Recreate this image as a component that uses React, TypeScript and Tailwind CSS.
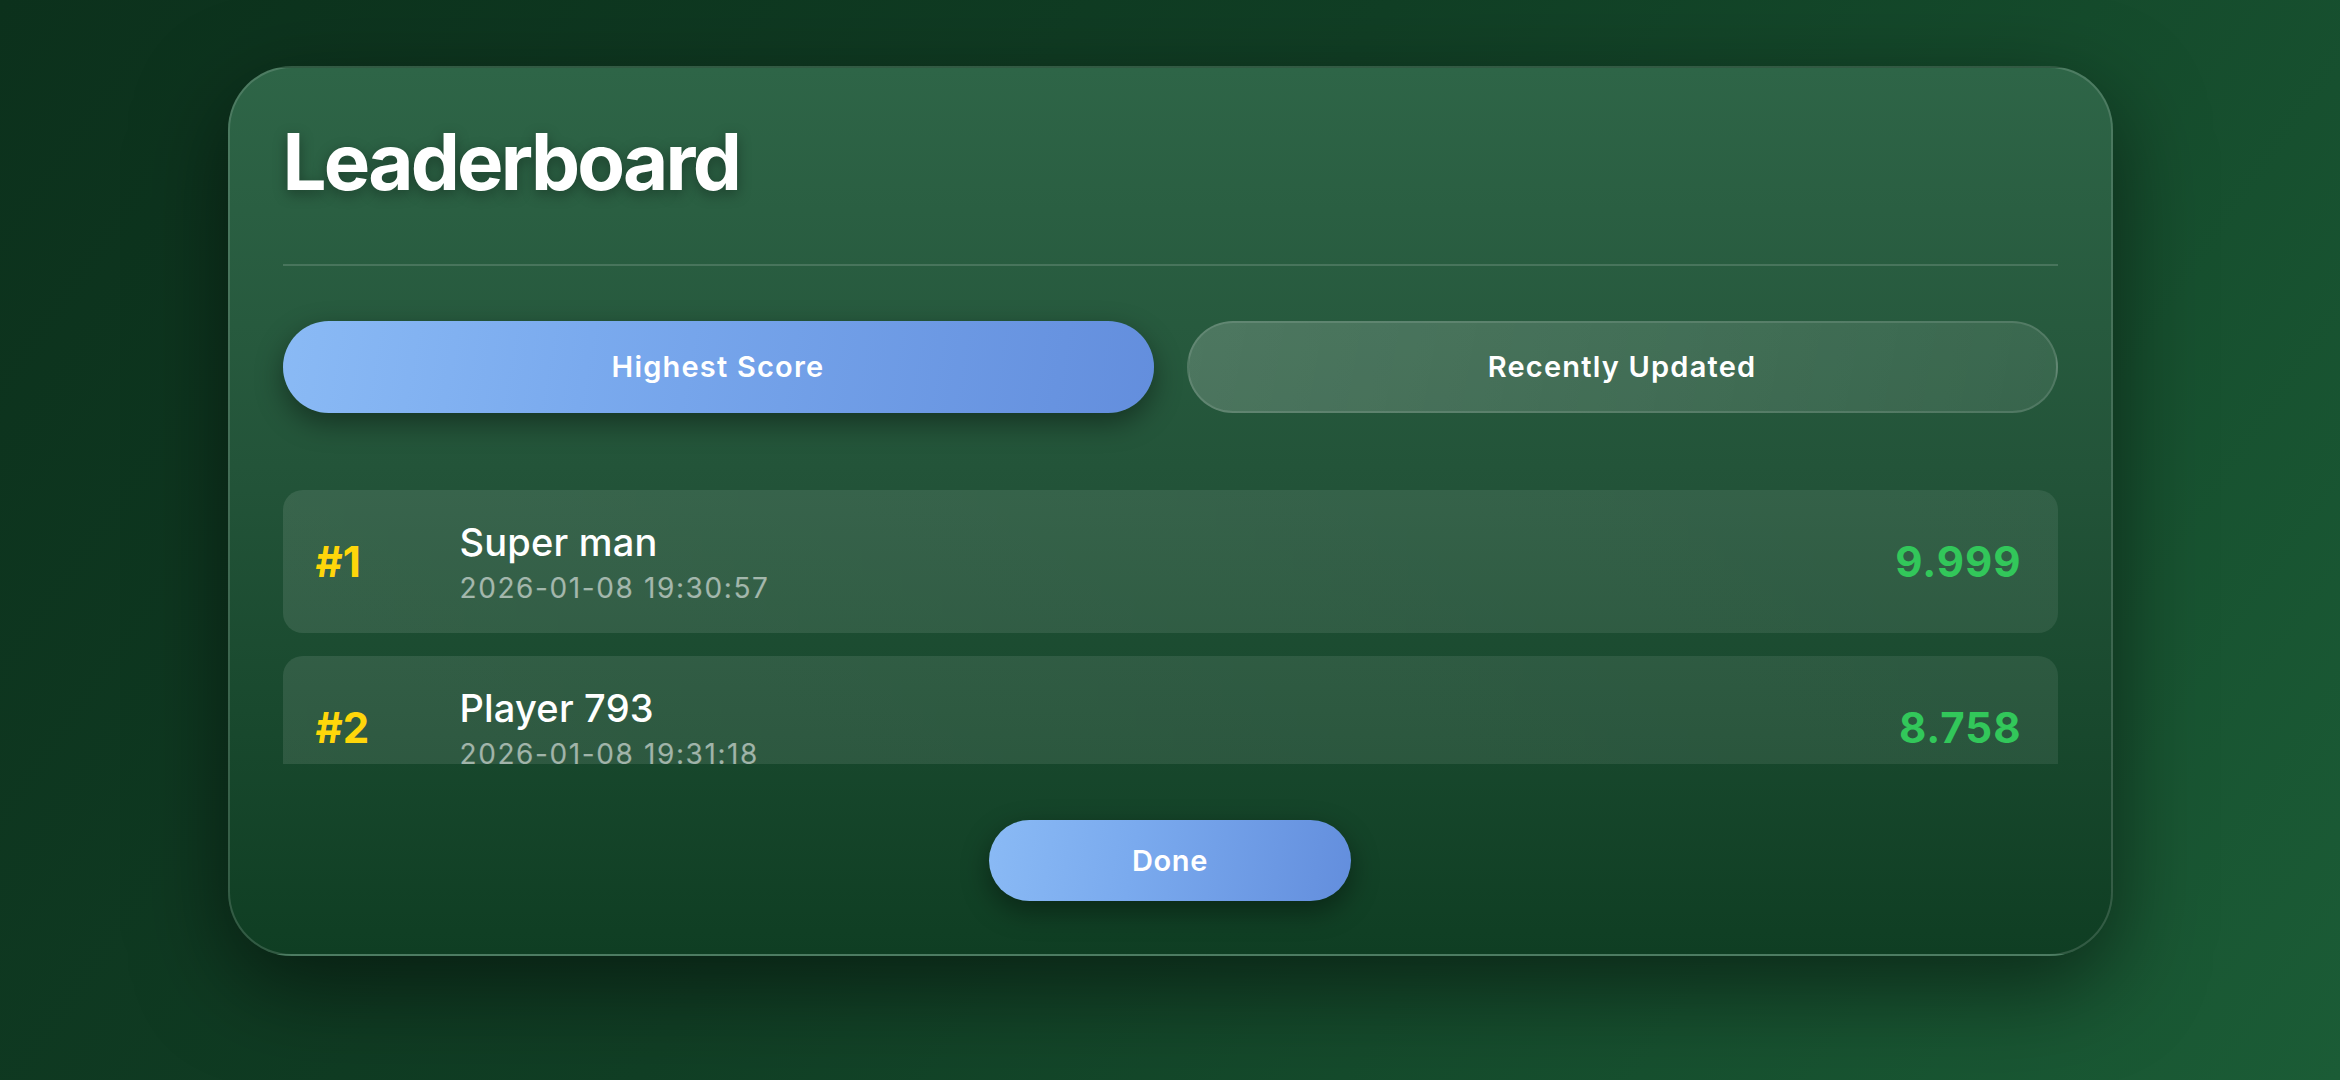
import React from "react"

type Entry = {
  rank: number
  name: string
  date: string
  score: string
}

const entries: Entry[] = [
  { rank: 1, name: "Super man", date: "2026-01-08 19:30:57", score: "9.999" },
  { rank: 2, name: "Player 793", date: "2026-01-08 19:31:18", score: "8.758" },
]

function EntryRow({ entry }: { entry: Entry }) {
  return (
    <div className="flex h-[143px] shrink-0 items-center rounded-[20px] bg-[linear-gradient(90deg,rgba(255,255,255,0.1),rgba(255,255,255,0.08))] pl-[33px] pr-[36px]">
      <span className="w-[144px] text-[42px] leading-none font-bold text-[#ffd60a]">
        #{entry.rank}
      </span>
      <div className="flex min-w-0 flex-1 flex-col">
        <span className="text-[38px] leading-[46px] font-medium tracking-[0.2px] text-white">
          {entry.name}
        </span>
        <span className="mt-[6px] text-[28px] leading-[34px] tracking-[1.6px] text-white/55">
          {entry.date}
        </span>
      </div>
      <span className="text-[42px] leading-none font-bold tracking-[1px] text-[#32c75a]">
        {entry.score}
      </span>
    </div>
  )
}

export default function App() {
  return (
    <div
      className="min-h-[1080px] w-full bg-[linear-gradient(125deg,#0c311c_0%,#113f25_45%,#1b5c36_100%)] pt-[66px]"
      style={{ fontFamily: "Inter, 'Noto Sans', sans-serif" }}
    >
      <div className="mx-auto flex w-[1885px] flex-col rounded-[64px] border-2 border-white/15 bg-[linear-gradient(180deg,#2e6547_0%,#235439_45%,#0f3e23_100%)] px-[53px] pt-[55px] pb-[53px] shadow-[0_30px_90px_rgba(0,0,0,0.5)]">
        <h1 className="text-[78px] leading-none font-bold tracking-[-2.8px] text-white [text-shadow:0_4px_14px_rgba(0,0,0,0.35)]">
          Leaderboard
        </h1>

        <div className="mt-[63px] h-[2px] bg-white/15" />

        <div className="mt-[55px] grid grid-cols-2 gap-[33px]">
          <button className="flex h-[92px] items-center justify-center rounded-full bg-[linear-gradient(100deg,#8abaf5_0%,#7aaaee_35%,#638edd_100%)] text-[29px] font-semibold tracking-[1.2px] text-white shadow-[0_10px_28px_rgba(0,0,0,0.4)]">
            Highest Score
          </button>
          <button className="flex h-[92px] items-center justify-center rounded-full border-2 border-white/12 bg-[linear-gradient(100deg,rgba(255,255,255,0.18),rgba(255,255,255,0.09))] text-[29px] font-semibold tracking-[1.2px] text-white">
            Recently Updated
          </button>
        </div>

        <div className="mt-[77px] flex h-[274px] flex-col gap-[23px] overflow-hidden">
          {entries.map((entry) => (
            <EntryRow key={entry.rank} entry={entry} />
          ))}
        </div>

        <div className="mt-[56px] flex justify-center">
          <button className="flex h-[81px] w-[362px] items-center justify-center rounded-full bg-[linear-gradient(100deg,#8abaf5_0%,#7aaaee_40%,#638edd_100%)] text-[29px] font-semibold tracking-[0.6px] text-white shadow-[0_10px_28px_rgba(0,0,0,0.4)]">
            Done
          </button>
        </div>
      </div>
    </div>
  )
}
